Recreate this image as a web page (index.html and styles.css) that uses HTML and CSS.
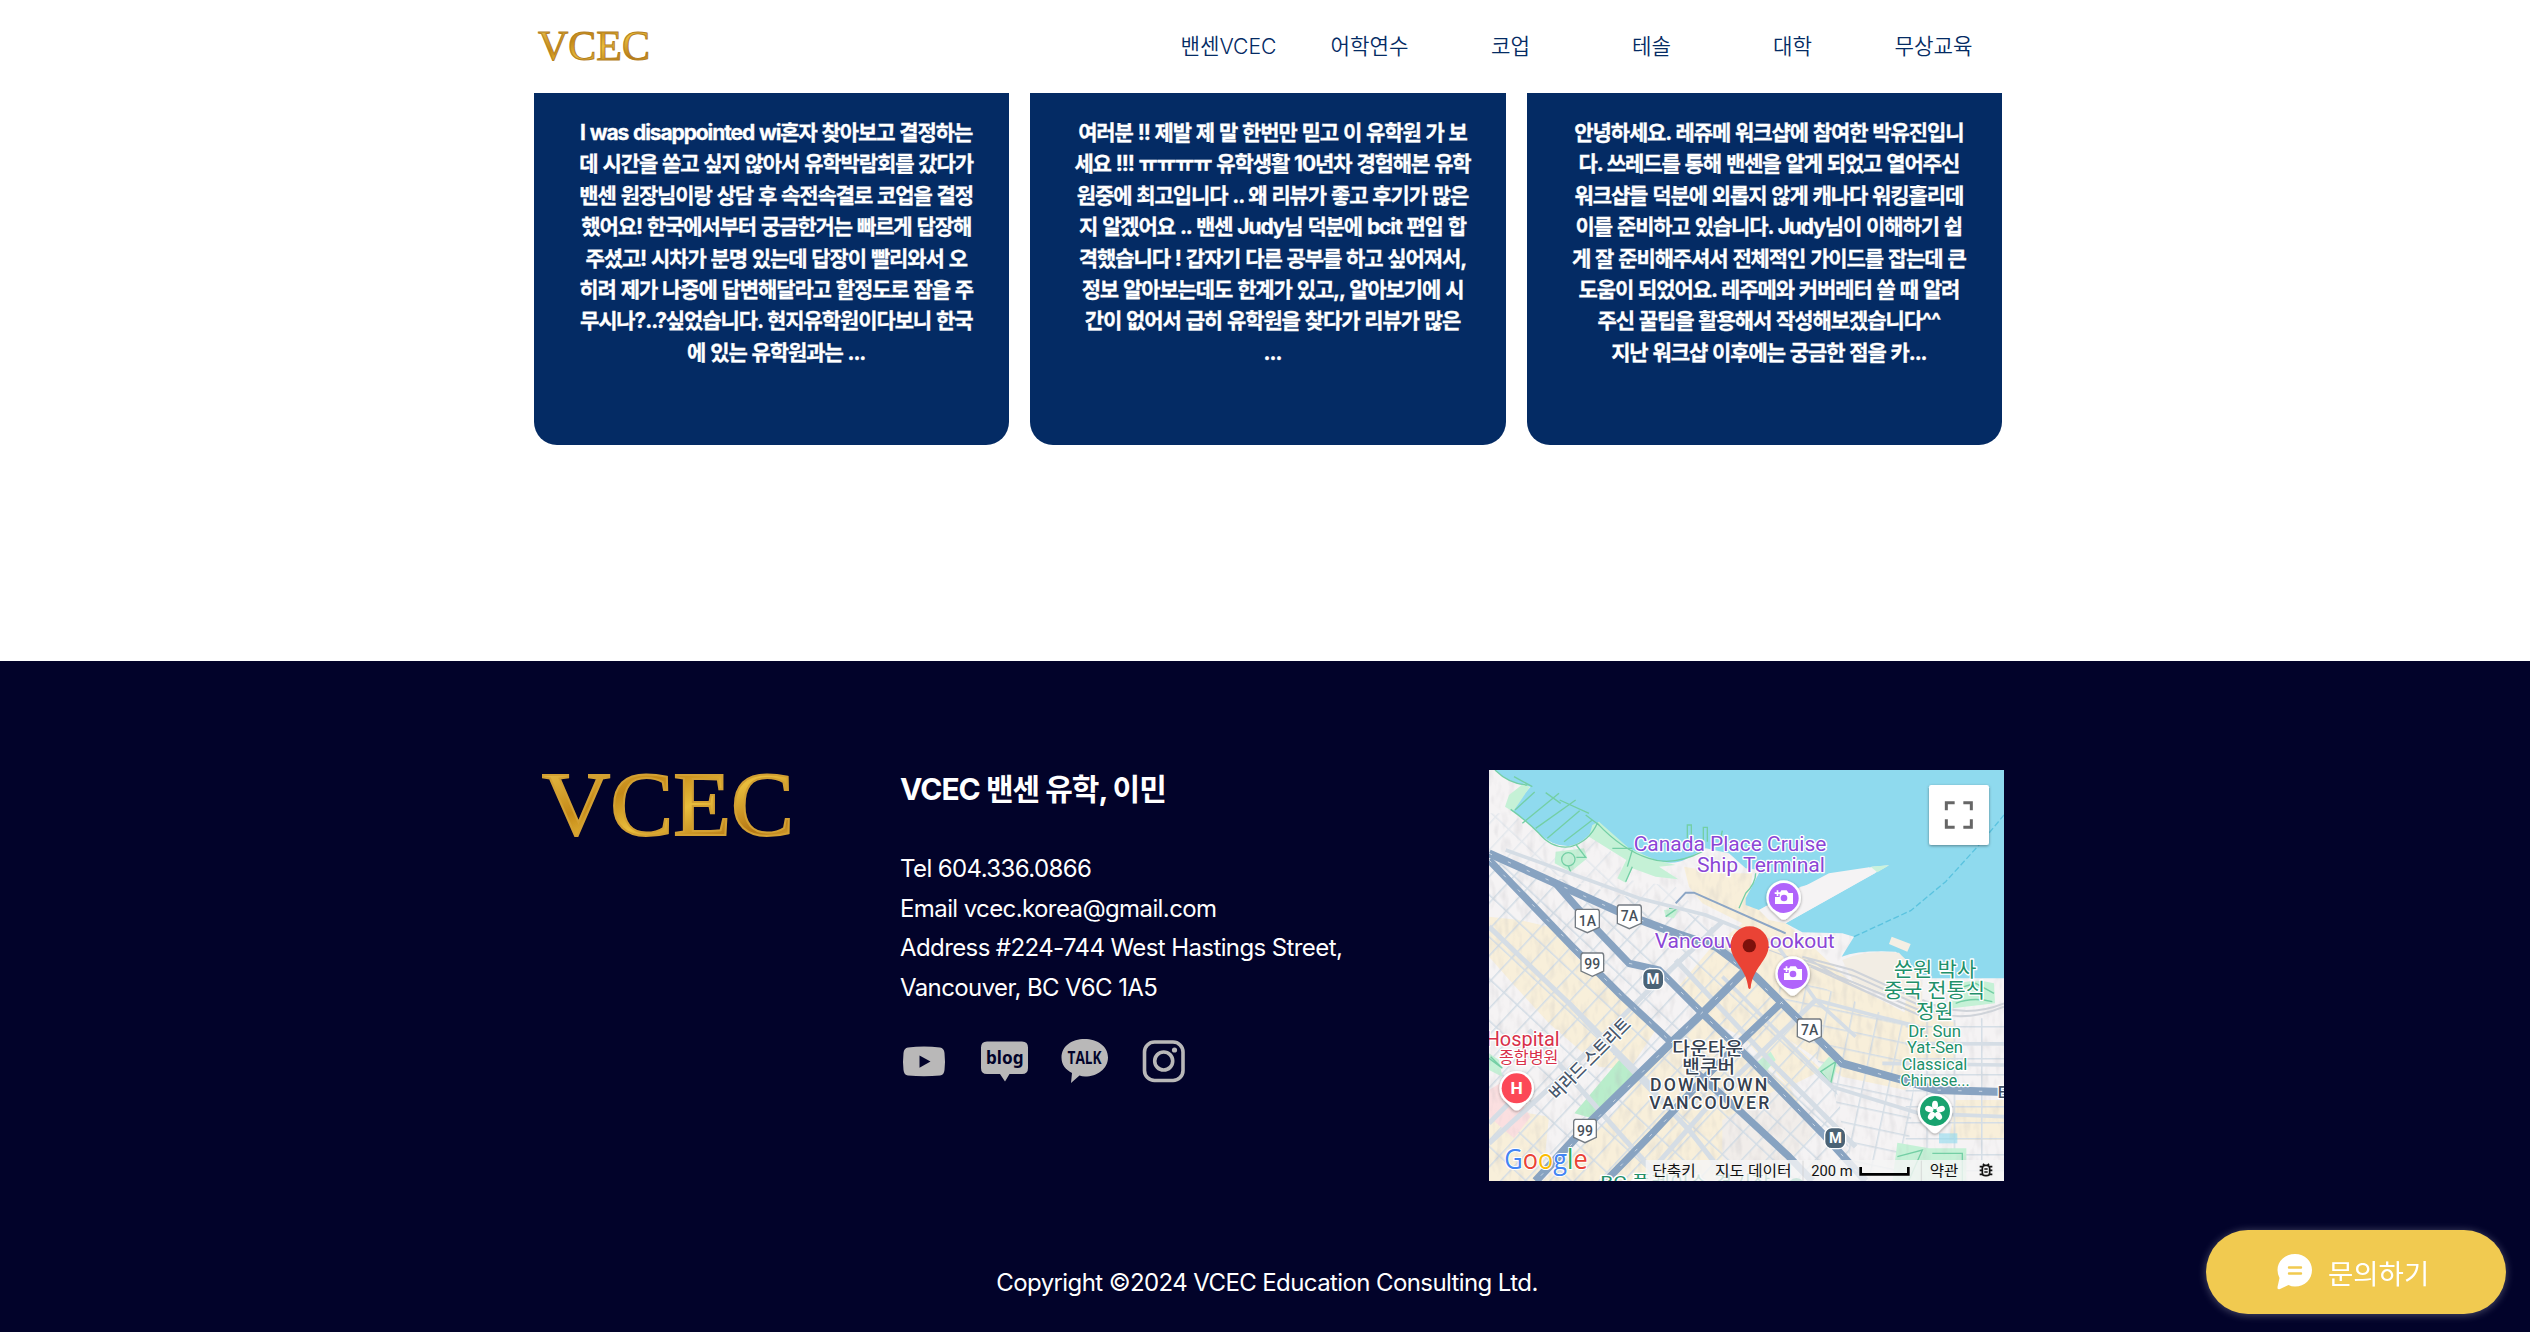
FILE: index.html
```html
<!DOCTYPE html>
<html lang="ko">
<head>
<meta charset="utf-8">
<title>VCEC 밴센 유학, 이민</title>
<link rel="stylesheet" href="styles.css">
</head>
<body>
<header class="header">
  <div class="header-inner">
    <svg class="header-logo" viewBox="0 0 120 56" role="img" aria-label="VCEC">
      <defs>
        <linearGradient id="gold" x1="0" y1="0" x2="1" y2="1">
          <stop offset="0" stop-color="#f0cb55"/><stop offset=".35" stop-color="#c58a18"/>
          <stop offset=".55" stop-color="#e9bd3c"/><stop offset=".8" stop-color="#b57714"/><stop offset="1" stop-color="#eac24a"/>
        </linearGradient>
      </defs>
      <text class="logo-type" x="4" y="44" font-size="41.500" textLength="112" lengthAdjust="spacingAndGlyphs" fill="url(#gold)" stroke="#b5801f" stroke-width="1">VCEC</text>
    </svg>
    <nav class="nav">
      <a>밴센VCEC</a><a>어학연수</a><a>코업</a><a>테솔</a><a>대학</a><a>무상교육</a>
    </nav>
  </div>
</header>

<main class="reviews">
  <article class="card"><p class="card-text">I was disappointed wi혼자 찾아보고 결정하는<br>데 시간을 쏟고 싶지 않아서 유학박람회를 갔다가<br>밴센 원장님이랑 상담 후 속전속결로 코업을 결정<br>했어요! 한국에서부터 궁금한거는 빠르게 답장해<br>주셨고! 시차가 분명 있는데 답장이 빨리와서 오<br>히려 제가 나중에 답변해달라고 할정도로 잠을 주<br>무시나?..?싶었습니다. 현지유학원이다보니 한국<br>에 있는 유학원과는 ...</p></article>
  <article class="card"><p class="card-text">여러분 !! 제발 제 말 한번만 믿고 이 유학원 가 보<br>세요 !!! ㅠㅠㅠㅠ 유학생활 10년차 경험해본 유학<br>원중에 최고입니다 .. 왜 리뷰가 좋고 후기가 많은<br>지 알겠어요 .. 밴센 Judy님 덕분에 bcit 편입 합<br>격했습니다 ! 갑자기 다른 공부를 하고 싶어져서,<br>정보 알아보는데도 한계가 있고,, 알아보기에 시<br>간이 없어서 급히 유학원을 찾다가 리뷰가 많은<br>...</p></article>
  <article class="card"><p class="card-text">안녕하세요. 레쥬메 워크샵에 참여한 박유진입니<br>다. 쓰레드를 통해 밴센을 알게 되었고 열어주신<br>워크샵들 덕분에 외롭지 않게 캐나다 워킹홀리데<br>이를 준비하고 있습니다. Judy님이 이해하기 쉽<br>게 잘 준비해주셔서 전체적인 가이드를 잡는데 큰<br>도움이 되었어요. 레주메와 커버레터 쓸 때 알려<br>주신 꿀팁을 활용해서 작성해보겠습니다^^<br>지난 워크샵 이후에는 궁금한 점을 카...</p></article>
</main>

<footer class="footer">
  <div class="footer-inner">
    <svg class="footer-logo" viewBox="0 0 264 100" role="img" aria-label="VCEC">
      <text class="logo-type" x="8" y="65" font-size="90" textLength="252" lengthAdjust="spacingAndGlyphs" fill="url(#gold)" stroke="#d3a032" stroke-width="2">VCEC</text>
    </svg>
    <div class="info">
      <h2 class="info-title">VCEC 밴센 유학, 이민</h2>
      <p class="info-text">Tel 604.336.0866<br>Email vcec.korea@gmail.com<br>Address #224-744 West Hastings Street,<br>Vancouver, BC V6C 1A5</p>
      <div class="social">
        <svg viewBox="0 0 48 48"><path fill="#b9b8b8" d="M8 9.500Q24 7.500 40 9.500Q44 10 44.500 15Q45.500 24 44.500 32Q44 37 40 37.500Q24 39 8 37.500Q4 37 3.500 32Q2.500 24 3.500 15Q4 10 8 9.500Z"/><path fill="#02032a" d="M19.500 17.500L30.500 23.500L19.500 29.800Z"/></svg>
        <svg viewBox="0 0 48 48"><path fill="#b9b8b8" d="M7 3.500H42Q48 3.500 48 9.500V30Q48 36 42 36H29.500L25 43.500L20 36H7Q1 36 1 30V9.500Q1 3.500 7 3.500Z"/><text class="blog" x="6" y="25.500" textLength="37.500" lengthAdjust="spacingAndGlyphs">blog</text></svg>
        <svg viewBox="0 0 48 48"><path fill="#b9b8b8" d="M24.500 1C37 1 48 8 48 19.500S37 38.500 25 38.500Q22 38.500 19.500 37.500L11 45L12 35C6 32 1.500 27 1.500 19.500C1.500 8 12 1 24.500 1Z"/><text class="talk" x="7.500" y="26" textLength="34" lengthAdjust="spacingAndGlyphs">TALK</text></svg>
        <svg viewBox="0 0 48 48"><g fill="none" stroke="#b9b8b8" stroke-width="3.600"><rect x="4.500" y="4" width="38.500" height="38.500" rx="10"/><circle cx="23.700" cy="23" r="9"/></g><circle cx="34.500" cy="12" r="2.600" fill="#b9b8b8"/></svg>
      </div>
    </div>
    <div class="map">
      <svg viewBox="0 0 1545 1233">
        <defs>
          <pattern id="grid" width="92" height="54" patternUnits="userSpaceOnUse" patternTransform="rotate(-47)">
            <path d="M0 2H92M2 0V54" stroke="#d3dde6" stroke-width="5" fill="none"/>
          </pattern>
          <pattern id="gridE" width="76" height="54" patternUnits="userSpaceOnUse" patternTransform="rotate(12)">
            <path d="M0 2H76M2 0V54" stroke="#d5dee6" stroke-width="5" fill="none"/>
          </pattern>
          <pattern id="gridF" width="82" height="48" patternUnits="userSpaceOnUse">
            <path d="M0 2H82M2 0V48" stroke="#d5dee6" stroke-width="5" fill="none"/>
          </pattern>
          <filter id="relief" x="0" y="0" width="1" height="1">
            <feTurbulence type="fractalNoise" baseFrequency=".05 .02" numOctaves="2" seed="4"/>
            <feColorMatrix values="0 0 0 0 .45 0 0 0 0 .45 0 0 0 0 .48 1.600 0 0 0 -.75"/>
          </filter>
          <filter id="drop" x="-20%" y="-20%" width="140%" height="150%"><feDropShadow dx="0" dy="3" stdDeviation="4" flood-opacity=".4"/></filter>
        </defs>
        <rect width="1545" height="1233" fill="#f5f3f4"/>
        <!-- built-up districts -->
        <g fill="#f8efda">
          <path d="M585 290L700 310L790 310L780 400L880 450L960 520L1100 650L1290 750L1250 960L1060 920L960 850L900 810L1000 900L900 950L760 800L640 740L560 660L660 540L760 460L640 400L600 350Z"/>
          <path d="M0 440L90 450L180 470L280 580L350 630L500 780L420 900L330 890L180 760L70 640L0 560Z"/>
          <path d="M520 830L640 740L900 950L980 1080L860 1233H160L360 1050Z"/>
          <path d="M0 1010L180 1040L160 1233H0Z"/>
          <path d="M1250 690L1400 760V900L1230 900Z"/>
          <path d="M1400 990H1545V1110H1380Z"/>
        </g>
        <path fill="#f1edea" d="M700 1050L860 960L980 1080L860 1233H700Z"/>
        <path fill="url(#grid)" d="M0 270L640 440L800 610L1030 900L1100 1233H0Z"/>
        <path fill="url(#grid)" opacity=".5" d="M0 130L70 130L200 240L330 190L420 330L560 350L640 440L0 260Z"/>
        <path fill="url(#gridE)" d="M880 600L1110 700L1290 780L1250 1233H1100L1030 950L860 650Z"/>
        <path fill="url(#gridF)" d="M1250 760L1545 740V1233H1250Z"/>
        <!-- parks -->
        <g fill="#c5f1d6">
          <path d="M200 245L285 235L295 265L245 305L197 280Z"/>
          <path d="M525 420L570 415L555 445L530 440Z"/>
          <path d="M0 850L30 870L40 920L0 900Z"/>
          <path d="M395 865L448 905L310 1045L256 1030Z" fill="#b9edcb"/>
          <path d="M800 880L845 845L860 870L830 905Z"/>
          <path d="M1020 860L1045 880L1030 940L985 900Z"/>
          <path d="M1225 1118L1320 1135H1432V1233H1210Z"/>
        </g>
        <path fill="#fbdfe0" d="M0 960L50 930L125 1040L75 1105L0 1040Z"/>
        <rect width="1545" height="1233" filter="url(#relief)" opacity=".35"/>
        <!-- water -->
        <path fill="#8fdaee" d="M18 0Q60 42 125 50L65 118Q110 150 150 190Q190 230 240 228Q290 220 325 160Q400 240 480 265Q550 290 590 268L650 235L720 250L770 295L815 300L770 385L770 405L810 420L935 350L1150 290L1200 286L890 460L940 487L1060 490L1095 500L1058 560Q1110 540 1220 545L1265 580L1280 625L1545 625V0Z"/>
        <g fill="#c5f1d6">
          <path d="M105 40L122 52L72 125L48 110L60 75Z"/>
          <path d="M310 165L330 155L420 235L500 270L560 285L510 290L568 328L500 320L430 295L410 338L385 325L412 270L300 200Z"/>
        </g>
        <path fill="#f5f3f4" d="M810 420L850 400L1020 310L1140 292L1160 308L890 460L840 450Z"/>
        <path fill="#c9f2dc" d="M1145 290L1200 286L1165 307Z"/>
        <path fill="#f4efe4" d="M1208 500L1265 522L1255 545L1200 522Z"/>
        <path fill="#f2ede4" d="M1060 570Q1120 540 1230 548L1270 590L1300 640V700L1100 650Z"/>
        <path fill="#c5f1d6" d="M1380 650Q1450 620 1515 640L1518 700L1390 715Z"/>
        <path fill="#8fdaee" d="M1350 1090h55v30h-55Z" opacity=".6"/>
        <path fill="none" stroke="#5bc3df" stroke-width="4" stroke-dasharray="18 8" d="M1095 500L1265 422L1370 335L1470 225L1545 135"/>
        <g fill="none" stroke="#74cfa5" stroke-width="4">
          <path d="M18 0Q60 42 115 45M65 118Q110 150 150 190Q190 238 245 230Q300 215 325 160Q400 240 480 265Q550 290 640 245"/>
          <path d="M75 20L130 50M78 120L137 66M100 160L210 70M140 175L260 90M175 205L272 122M225 215L310 150M170 68L215 100M212 90L300 130M290 135L330 165"/>
          <path d="M595 205V165H607V205M643 215V172H655V215M690 225L700 182M410 335L430 290M370 235H430M430 240L415 290M800 310Q800 340 770 370L750 415"/>
          <circle cx="238" cy="268" r="20"/><path d="M238 288L245 305M262 225L290 262L262 262M530 440L565 415L540 415M0 865L40 895L5 860M1225 1160L1300 1140L1260 1230M1330 1150H1420V1233M995 905L1040 875L1025 940Z"/>
          <path d="M1390 660L1460 640L1515 670M1400 700Q1450 680 1510 695"/>
        </g>
        <!-- rail yard -->
        <g fill="none" stroke="#cfd3d9" stroke-width="4">
          <path d="M940 560L1090 600L1290 690M945 570L1100 620L1290 705M950 580L1100 640L1290 720M965 590L1120 660L1290 735M955 565L1080 640L1240 715M1290 705Q1400 770 1545 710M1300 690Q1420 750 1545 700" stroke-width="6"/>
          <path d="M840 540L1000 600L1200 680"/>
        </g>
        <!-- secondary streets -->
        <g fill="none" stroke="#d5dde5" stroke-width="15">
          <path d="M50 240L450 385L650 435L860 520L980 690L1100 800" stroke-width="11"/>
          <path d="M0 470L240 700L400 870L600 1080L720 1233"/>
          <path d="M0 1120L240 900L500 640L700 455"/>
          <path d="M120 780L400 1100L520 1233"/>
          <path d="M0 1060L120 940M240 700L340 800L500 960"/>
          <path d="M980 690L700 960L480 1210"/>
          <path d="M560 570L850 880L1100 1130"/>
          <path d="M980 690L1170 740L1290 770M1030 950L1290 1030L1545 1040M700 620L1030 950M1250 820L1545 822M1180 880L1545 885" stroke-width="11"/>
        </g>
        <path d="M560 400L590 368H615L890 490" fill="none" stroke="#8ba5c5" stroke-width="6"/>
        <!-- main highways -->
        <g fill="none" stroke="#88a3c1" stroke-width="22" stroke-linejoin="round">
          <path d="M0 250L200 340L400 430L560 490L680 530L800 620L870 690L1060 880L1240 930L1340 960L1545 966" stroke-width="24"/>
          <path d="M0 270L250 530L400 680L545 815"/>
          <path d="M200 340L310 465L420 580L510 600L640 730L780 865L1000 1090L1130 1233"/>
          <path d="M775 595L640 730L545 820L300 1060L140 1233" stroke-width="25"/>
          <path d="M880 695L760 810L640 930L490 1090L350 1233"/>
          <path d="M590 880L760 1030L900 1160L970 1233"/>
        </g>
        <g fill="none" stroke="#d8e1ea" stroke-width="2.500" stroke-dasharray="10 52">
          <path d="M0 250L400 430L680 530L870 690L1060 880L1340 960L1545 966M0 270L400 680L545 815M420 580L510 600L1000 1090L1130 1233M775 595L545 820L140 1233M880 695L350 1233"/>
        </g>
        <!-- route shields -->
        <g class="shield">
          <path d="M264 418H326Q332 420 331 430V472L295 488L259 472V430Q258 420 264 418Z"/><path d="M390 405H452Q458 407 457 417V460L421 476L385 460V417Q384 407 390 405Z"/><path d="M281 549H339Q345 551 344 561V603L310 619L276 603V561Q275 551 281 549Z"/><path d="M259 1048H317Q323 1050 322 1060V1102L288 1118L254 1102V1060Q253 1050 259 1048Z"/><path d="M930 747H992Q998 749 997 759V800L961 816L925 800V759Q924 749 930 747Z"/>
          <text x="295" y="468">1A</text><text x="421" y="454">7A</text><text x="310" y="598">99</text><text x="288" y="1098">99</text><text x="962" y="796">7A</text>
        </g>
        <g class="metro"><rect x="461" y="596" width="63" height="63" rx="21"/><text x="492" y="642">M</text><rect x="1007" y="1073" width="63" height="63" rx="21"/><text x="1039" y="1119">M</text></g>
        <!-- place labels -->
        <g class="label" fill="#8b46d6">
          <text x="434" y="244" font-size="63" textLength="578" lengthAdjust="spacingAndGlyphs">Canada Place Cruise</text>
          <text x="624" y="307" font-size="63" textLength="384" lengthAdjust="spacingAndGlyphs">Ship Terminal</text>
          <text x="497" y="534" font-size="63" textLength="540" lengthAdjust="spacingAndGlyphs">Vancouver Lookout</text>
        </g>
        <g class="label" fill="#d8304a">
          <text x="-10" y="828" font-size="61" textLength="222" lengthAdjust="spacingAndGlyphs">Hospital</text>
          <text x="30" y="880" font-size="48" textLength="178" lengthAdjust="spacingAndGlyphs">종합병원</text>
        </g>
        <g class="label" fill="#21906a">
          <text x="1214" y="620" font-size="62" textLength="248" lengthAdjust="spacingAndGlyphs">쑨원 박사</text><text x="1184" y="684" font-size="62" textLength="304" lengthAdjust="spacingAndGlyphs">중국 전통식</text><text x="1281" y="748" font-size="62" textLength="112" lengthAdjust="spacingAndGlyphs">정원</text>
          <text x="1258" y="801" font-size="51" textLength="158" lengthAdjust="spacingAndGlyphs">Dr. Sun</text><text x="1254" y="850" font-size="51" textLength="168" lengthAdjust="spacingAndGlyphs">Yat-Sen</text><text x="1238" y="900" font-size="51" textLength="197" lengthAdjust="spacingAndGlyphs">Classical</text><text x="1234" y="948" font-size="51" textLength="208" lengthAdjust="spacingAndGlyphs">Chinese...</text>
        </g>
        <g class="label bold" fill="#35404f">
          <text x="550" y="856" font-size="54" textLength="212" lengthAdjust="spacingAndGlyphs">다운타운</text><text x="580" y="909" font-size="54" textLength="158" lengthAdjust="spacingAndGlyphs">밴쿠버</text>
          <text x="483" y="962" font-size="53" textLength="352">DOWNTOWN</text><text x="481" y="1016" font-size="53" textLength="360">VANCOUVER</text>
        </g>
        <text class="label bold" fill="#46566b" font-size="54" textLength="318" lengthAdjust="spacingAndGlyphs" transform="translate(204 992) rotate(-45)">버라드 스트리트</text>
        <text class="label bold" fill="#46566b" font-size="48" x="1526" y="983">E</text>
        <text class="label" fill="#21906a" font-size="50" x="334" y="1253" textLength="510" lengthAdjust="spacingAndGlyphs">BC 플레이스 경기장</text>
        <circle cx="922" cy="1250" r="26" fill="#18a36f"/>
        <!-- place pins -->
        <g filter="url(#drop)" fill="#fff">
          <path d="M884 331A52 52 0 0 1 936 383Q936 410 912 428L895 445Q884 454 873 445L856 428Q832 410 832 383A52 52 0 0 1 884 331Z"/>
          <path d="M911 559A52 52 0 0 1 963 611Q963 638 939 656L922 673Q911 682 900 673L883 656Q859 638 859 611A52 52 0 0 1 911 559Z"/>
          <path d="M83 903A52 52 0 0 1 135 955Q135 982 111 1000L94 1017Q83 1026 72 1017L55 1000Q31 982 31 955A52 52 0 0 1 83 903Z"/>
          <path d="M1338 971A52 52 0 0 1 1390 1023Q1390 1050 1366 1068L1349 1085Q1338 1094 1327 1085L1310 1068Q1286 1050 1286 1023A52 52 0 0 1 1338 971Z"/>
        </g>
        <circle cx="884" cy="384" r="45" fill="#b064fb"/><circle cx="911" cy="612" r="45" fill="#b064fb"/><circle cx="83" cy="955" r="45" fill="#fc4857"/><circle cx="1338" cy="1023" r="45" fill="#18a36f"/>
        <g id="camera"><path fill="#fff" d="M872 369L877 361H893L899 369H912V402H858V381H872ZM863 361H868V367H874V372H868V378H863V372H857V367H863Z"/><circle cx="885" cy="384" r="10" fill="#b064fb"/></g>
        <use href="#camera" x="27" y="228"/>
        <text class="hospital" x="83" y="973">H</text>
        <g fill="#fff"><ellipse cx="1338" cy="1005" rx="9" ry="13"/><ellipse cx="1338" cy="1005" rx="9" ry="13" transform="rotate(72 1338 1023)"/><ellipse cx="1338" cy="1005" rx="9" ry="13" transform="rotate(144 1338 1023)"/><ellipse cx="1338" cy="1005" rx="9" ry="13" transform="rotate(216 1338 1023)"/><ellipse cx="1338" cy="1005" rx="9" ry="13" transform="rotate(288 1338 1023)"/></g>
        <path fill="#ea4335" d="M782 469A57 57 0 0 1 839 527C839 570 790 595 785 654Q782 660 778 654C773 595 725 570 725 527A57 57 0 0 1 782 469Z"/><circle cx="781" cy="527" r="20" fill="#7d110c"/>
        <!-- map controls -->
        <rect x="1320" y="45" width="180" height="180" rx="7" fill="#fff" filter="url(#drop)"/>
        <path fill="none" stroke="#666" stroke-width="9" d="M1372 121V98H1397M1423 98H1447V121M1447 148V172H1423M1397 172H1372V148"/>
        <path fill="#f5f5f5" fill-opacity=".82" d="M470 1170H1545V1233H470Z"/><path fill="none" stroke="#ccc" stroke-width="2" d="M942 1172V1233M1297 1172V1233"/>
        <g class="control"><text x="490" y="1217" textLength="130" lengthAdjust="spacingAndGlyphs">단축키</text><text x="678" y="1217" textLength="230" lengthAdjust="spacingAndGlyphs">지도 데이터</text><text x="967" y="1217" textLength="124" lengthAdjust="spacingAndGlyphs">200 m</text><text x="1322" y="1217" textLength="86" lengthAdjust="spacingAndGlyphs">약관</text></g>
        <path fill="none" stroke="#000" stroke-width="8" d="M1115 1191V1213H1258V1191"/>
        <g fill="none" stroke="#111" stroke-width="5"><rect x="1480" y="1186" width="22" height="31" rx="9"/><path d="M1482 1181L1486 1186M1500 1181L1496 1186M1472 1190H1480M1472 1201H1480M1472 1213H1480M1502 1190H1510M1502 1201H1510M1502 1213H1510M1486 1197H1496M1486 1206H1496"/></g>
        <text class="google" x="46" y="1196" textLength="250" lengthAdjust="spacingAndGlyphs"><tspan fill="#4285f4">G</tspan><tspan fill="#ea4335">o</tspan><tspan fill="#fbbc04">o</tspan><tspan fill="#4285f4">g</tspan><tspan fill="#34a853">l</tspan><tspan fill="#ea4335">e</tspan></text>
      </svg>
    </div>
  </div>
  <p class="copyright">Copyright ©2024 VCEC Education Consulting Ltd.</p>
</footer>

<button class="chat" type="button">
  <svg viewBox="0 0 36 36"><path fill="#fff" d="M18 0C28 0 35 7 35 16S28 32.500 18 32.500Q14.500 32.500 11.500 31L3 35Q0 36 .5 33L2.500 24Q.5 20 .5 16C.5 7 8 0 18 0Z"/><path stroke="#f1ca50" stroke-width="2.400" stroke-linecap="round" d="M12 13.500H24M12 19.500H24"/></svg>
  <span>문의하기</span>
</button>
</body>
</html>
```
FILE: styles.css
```css
* { box-sizing: border-box; }
body {
  margin: 0;
  height: 1332px;
  overflow: hidden;
  background: #fff;
  font-family: Inter, "Noto Sans CJK KR", sans-serif;
}
.header { height: 93px; background: #fff; }
.header-inner {
  width: 1470px;
  height: 88px;
  margin-left: 534px;
  display: flex;
  align-items: center;
  justify-content: space-between;
}
.header-logo { width: 120px; height: 56px; }
.logo-type { font-family: "Liberation Serif", serif; }
.nav { display: flex; }
.nav a {
  width: 141px;
  text-align: center;
  font-size: 21.2px;
  font-weight: 350;
  color: #042b64;
}
.reviews {
  width: 1468px;
  height: 568px;
  margin-left: 534px;
  display: grid;
  grid-template-columns: repeat(3, 1fr);
  gap: 21px;
  align-items: start;
}
.card {
  height: 352px;
  padding: 24px 0 0 9px;
  border-radius: 0 0 23px 23px;
  background: #042b64;
}
.card-text {
  margin: 0;
  text-align: center;
  white-space: nowrap;
  color: #fff;
  font-size: 21px;
  font-weight: 700;
  line-height: 31.4px;
  letter-spacing: -1.1px;
  word-spacing: 1px;
  -webkit-text-stroke: .3px #fff;
}
.footer {
  height: 671px;
  padding-top: 109px;
  background: #02032a;
  color: #fff;
}
.footer-inner {
  width: 1470px;
  height: 411px;
  margin-left: 534px;
  display: grid;
  grid-template-columns: 366px 589px 515px;
}
.footer-logo { width: 264px; height: 100px; }
.info-title {
  margin: 0;
  font-size: 30px;
  line-height: 39px;
  font-weight: 700;
  letter-spacing: -1px;
}
.info-text {
  margin: 40px 0 0;
  font-size: 24px;
  line-height: 39.6px;
  letter-spacing: -.6px;
}
.social { display: flex; gap: 32px; margin-top: 31px; }
.social svg { width: 48px; height: 48px; }
.blog { font: 700 18px "Noto Sans", sans-serif; fill: #02032a; }
.talk { font: 700 17px "Open Sans", sans-serif; fill: #02032a; }
.map, .map svg { display: block; width: 515px; height: 411px; }
.map text { font-family: Roboto, "Noto Sans CJK KR", sans-serif; }
.shield path { fill: #fff; stroke: #747b82; stroke-width: 4; }
.shield text { font-size: 42px; font-weight: 500; fill: #46505a; text-anchor: middle; }
.metro rect { fill: #4b6376; stroke: #fff; stroke-width: 4; }
.metro text { font-size: 44px; font-weight: 700; fill: #fff; text-anchor: middle; }
.label, .label text { paint-order: stroke; stroke: #fff; stroke-width: 8px; stroke-linejoin: round; }
.bold { font-weight: 500; }
.map .hospital { font-size: 52px; font-weight: 700; fill: #fff; text-anchor: middle; }
.control text { font-size: 44px; fill: #111; }
.map .google { font-family: "Open Sans", sans-serif; font-size: 82px; font-weight: 500; paint-order: stroke; stroke: #fff; stroke-width: 6px; }
.copyright {
  margin: 82px 0 0;
  padding-left: 4px;
  text-align: center;
  font-size: 24px;
  line-height: 40px;
  letter-spacing: -.6px;
}
.chat {
  position: fixed;
  left: 2206px;
  top: 1230px;
  width: 300px;
  height: 84px;
  padding: 0 0 0 71px;
  display: flex;
  align-items: center;
  gap: 15px;
  border: 0;
  border-radius: 42px;
  background: #f1ca50;
  box-shadow: 0 1px 8px rgba(255, 255, 255, .3);
  color: #fff;
  font: 400 27.5px "Noto Sans CJK KR", sans-serif;
}
.chat svg { width: 36px; height: 36px; }
```
